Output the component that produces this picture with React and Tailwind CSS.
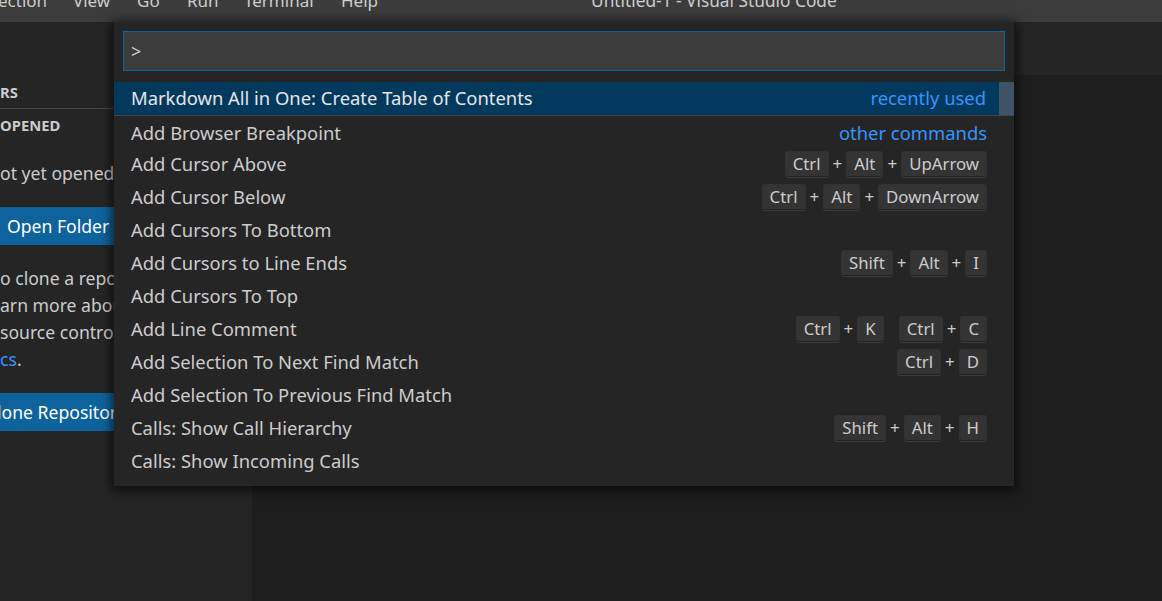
import React from "react";

const rows = [
  { label: "Add Browser Breakpoint", desc: "other commands", sep: true },
  { label: "Add Cursor Above", keys: [["Ctrl", "Alt", "UpArrow"]] },
  { label: "Add Cursor Below", keys: [["Ctrl", "Alt", "DownArrow"]] },
  { label: "Add Cursors To Bottom" },
  { label: "Add Cursors to Line Ends", keys: [["Shift", "Alt", "I"]] },
  { label: "Add Cursors To Top" },
  { label: "Add Line Comment", keys: [["Ctrl", "K"], ["Ctrl", "C"]] },
  { label: "Add Selection To Next Find Match", keys: [["Ctrl", "D"]] },
  { label: "Add Selection To Previous Find Match" },
  { label: "Calls: Show Call Hierarchy", keys: [["Shift", "Alt", "H"]] },
  { label: "Calls: Show Incoming Calls" },
];

function Key({ k }) {
  return (
    <span className="inline-flex h-[27px] items-center rounded-[3px] border border-[#33333399] border-b-[#44444499] bg-[#8080802b] px-[7px] text-[16.8px] leading-none text-[#cccccc] shadow-[inset_0_-1px_0_rgba(0,0,0,0.36)]">
      {k}
    </span>
  );
}

function Chord({ parts }) {
  return (
    <span className="flex items-center">
      {parts.map((p, i) => (
        <React.Fragment key={i}>
          {i > 0 && <span className="px-[4px] text-[17px] text-[#cccccc]">+</span>}
          <Key k={p} />
        </React.Fragment>
      ))}
    </span>
  );
}

export default function App() {
  return (
    <div
      className="relative h-[601px] w-[1162px] overflow-hidden bg-[#1e1e1e] text-[#cccccc]"
      style={{ fontFamily: '"Noto Sans", "Open Sans", sans-serif' }}
    >
      {/* Title bar */}
      <div className="flex h-[22px] items-start overflow-hidden bg-[#3c3c3c] text-[17px] leading-none text-[#cccccc]">
        <div className="-mt-[8px] flex">
          <span className="-ml-[2px] w-[75px]">ection</span>
          <span className="w-[64px]">View</span>
          <span className="w-[50px]">Go</span>
          <span className="w-[57px]">Run</span>
          <span className="w-[97px]">Terminal</span>
          <span className="w-[60px]">Help</span>
        </div>
        <div className="-mt-[8px] ml-[190px] text-[17.3px]">Untitled-1 - Visual Studio Code</div>
      </div>

      <div className="flex h-[579px]">
        {/* Sidebar */}
        <div className="w-[252px] shrink-0 overflow-hidden bg-[#252526] text-[17.6px]">
          <div className="h-[55px]" />
          <div className="flex h-[31px] items-center text-[14.8px] font-bold leading-none">RS</div>
          <div className="h-[1px] bg-[#474747]" />
          <div className="flex h-[33px] items-center text-[14.8px] font-bold leading-none">OPENED</div>
          <div className="mt-[15px] flex h-[33px] items-center whitespace-nowrap">ot yet opened a folder.</div>
          <div className="mt-[17px] flex h-[38px] items-center whitespace-nowrap bg-[#0e639c] pl-[7px] text-white">
            Open Folder
          </div>
          <div className="mt-[20px] whitespace-nowrap leading-[27px]">
            <div>o clone a repository locally.</div>
            <div>arn more about how to use</div>
            <div>source control in VS Code</div>
            <div>
              <span className="text-[#3794ff]">cs</span>.
            </div>
          </div>
          <div className="mt-[20px] flex h-[38px] items-center whitespace-nowrap bg-[#0e639c] text-white">
            <span className="-ml-[3px]">lone Repository</span>
          </div>
        </div>

        {/* Editor */}
        <div className="flex flex-1 flex-col">
          <div className="h-[53px] bg-[#252526]" />
          <div className="flex-1 bg-[#1e1e1e]" />
        </div>
      </div>

      {/* Command palette */}
      <div className="absolute left-[114px] top-[22px] flex h-[464px] w-[900px] flex-col bg-[#252526] shadow-[0_2px_10px_3px_rgba(0,0,0,0.6)]">
        <div className="mx-[9px] mt-[9px] flex h-[40px] items-center border border-[#0e639c] bg-[#3c3c3c] pl-[7px] text-[18px] text-[#cccccc]">
          &gt;
        </div>
        <div className="mt-[11px] flex flex-col text-[18.4px]">
          <div className="flex h-[33px]">
            <div className="flex flex-1 items-center justify-between bg-[#04395e] pb-[1px] pl-[17px] pr-[13px] text-[#e6e6e6]">
              <span>Markdown All in One: Create Table of Contents</span>
              <span className="text-[#3794ff]">recently used</span>
            </div>
            <div className="w-[15px] bg-[#3e5366]" />
          </div>
          {rows.map((r, i) => (
            <div
              key={i}
              className={
                "flex h-[33px] items-center justify-between pl-[17px] pr-[27px] " +
                (r.sep ? "border-t border-[#454545] pt-[1px]" : "pb-[1px]")
              }
            >
              <span>{r.label}</span>
              {r.desc && <span className="text-[#3794ff]">{r.desc}</span>}
              {r.keys && (
                <span className="flex items-center gap-[15px]">
                  {r.keys.map((c, j) => (
                    <Chord key={j} parts={c} />
                  ))}
                </span>
              )}
            </div>
          ))}
        </div>
      </div>
    </div>
  );
}
